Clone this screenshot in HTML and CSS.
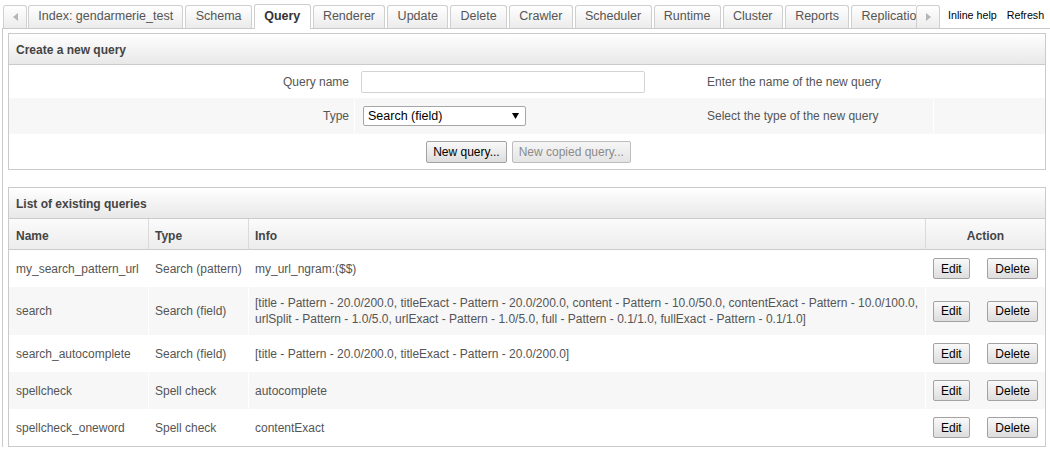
FILE: index.html
```html
<!DOCTYPE html>
<html lang="en">
<head>
<meta charset="utf-8">
<title>Query</title>
<link rel="stylesheet" href="styles.css">
</head>
<body>
<div class="page">
  <div class="topbar">
    <div class="scroll scroll-left"><svg width="5" height="8" viewBox="0 0 5 8"><path d="M5 0 L0 4 L5 8 Z" fill="#b5b5b5"/></svg></div>
    <div class="tabs-viewport">
      <div class="tabs">
        <div class="tab">Index: gendarmerie_test</div>
        <div class="tab">Schema</div>
        <div class="tab active">Query</div>
        <div class="tab">Renderer</div>
        <div class="tab">Update</div>
        <div class="tab">Delete</div>
        <div class="tab">Crawler</div>
        <div class="tab">Scheduler</div>
        <div class="tab">Runtime</div>
        <div class="tab">Cluster</div>
        <div class="tab">Reports</div>
        <div class="tab">Replication</div>
      </div>
    </div>
    <div class="scroll scroll-right"><svg width="5" height="8" viewBox="0 0 5 8"><path d="M0 0 L5 4 L0 8 Z" fill="#b5b5b5"/></svg></div>
    <div class="links"><span>Inline help</span><span>Refresh</span></div>
  </div>

  <div class="tabpanel">
    <section class="panel">
      <div class="panel-head">Create a new query</div>
      <div class="frow r1">
        <div class="fcell flabel">Query name</div>
        <div class="fcell ffield sep"><input class="text-input" type="text"></div>
        <div class="fcell fhelp">Enter the name of the new query</div>
        <div class="fcell sep"></div>
      </div>
      <div class="frow r2 alt">
        <div class="fcell flabel">Type</div>
        <div class="fcell ffield sep">
          <div class="select-wrap">
            <select class="select"><option>Search (field)</option></select>
            <svg class="select-arrow" width="7" height="6" viewBox="0 0 7 6"><path d="M0 0 L7 0 L3.5 6 Z" fill="#000"/></svg>
          </div>
        </div>
        <div class="fcell fhelp">Select the type of the new query</div>
        <div class="fcell sep"></div>
      </div>
      <div class="factions">
        <button class="btn">New query...</button>
        <button class="btn" disabled>New copied query...</button>
      </div>
    </section>

    <section class="panel">
      <div class="panel-head">List of existing queries</div>
      <table class="qtable">
        <colgroup>
          <col class="c-name">
          <col class="c-type">
          <col class="c-info">
          <col class="c-act">
        </colgroup>
        <thead>
          <tr><th>Name</th><th>Type</th><th>Info</th><th class="th-act">Action</th></tr>
        </thead>
        <tbody>
          <tr>
            <td>my_search_pattern_url</td><td>Search (pattern)</td><td>my_url_ngram:($$)</td>
            <td class="td-act"><div class="acts"><button class="btn sm">Edit</button><button class="btn sm">Delete</button></div></td>
          </tr>
          <tr class="alt">
            <td>search</td><td>Search (field)</td><td>[title - Pattern - 20.0/200.0, titleExact - Pattern - 20.0/200.0, content - Pattern - 10.0/50.0, contentExact - Pattern - 10.0/100.0, urlSplit - Pattern - 1.0/5.0, urlExact - Pattern - 1.0/5.0, full - Pattern - 0.1/1.0, fullExact - Pattern - 0.1/1.0]</td>
            <td class="td-act"><div class="acts"><button class="btn sm">Edit</button><button class="btn sm">Delete</button></div></td>
          </tr>
          <tr>
            <td>search_autocomplete</td><td>Search (field)</td><td>[title - Pattern - 20.0/200.0, titleExact - Pattern - 20.0/200.0]</td>
            <td class="td-act"><div class="acts"><button class="btn sm">Edit</button><button class="btn sm">Delete</button></div></td>
          </tr>
          <tr class="alt">
            <td>spellcheck</td><td>Spell check</td><td>autocomplete</td>
            <td class="td-act"><div class="acts"><button class="btn sm">Edit</button><button class="btn sm">Delete</button></div></td>
          </tr>
          <tr>
            <td>spellcheck_oneword</td><td>Spell check</td><td>contentExact</td>
            <td class="td-act"><div class="acts"><button class="btn sm">Edit</button><button class="btn sm">Delete</button></div></td>
          </tr>
        </tbody>
      </table>
    </section>
  </div>
</div>
</body>
</html>
```

FILE: styles.css
```css
html, body {
  margin: 0;
  padding: 0;
  background: #fff;
}
body {
  font-family: "Liberation Sans", Arial, sans-serif;
  font-size: 12px;
  color: #555;
  overflow: hidden;
}
.page {
  margin-left: 2px;
}

/* ---------- tab bar ---------- */
.topbar {
  display: flex;
  align-items: flex-end;
  height: 29px;
  box-sizing: border-box;
  border-bottom: 1px solid #cacaca;
  padding-left: 1px;
}
.scroll {
  flex: none;
  box-sizing: border-box;
  width: 24px;
  height: 23px;
  border: 1px solid #d0d0d0;
  border-bottom: none;
  border-radius: 3px 3px 0 0;
  background: linear-gradient(#ffffff, #ececec);
  display: flex;
  align-items: center;
  justify-content: center;
}
.scroll-left {
  margin-right: 1px;
}
.tabs-viewport {
  flex: none;
  width: 888px;
  height: 25px;
  margin-bottom: -1px;
  overflow: hidden;
}
.tabs {
  display: flex;
  align-items: flex-end;
  gap: 2px;
  height: 25px;
  white-space: nowrap;
}
.tab {
  flex: none;
  box-sizing: border-box;
  height: 23px;
  margin-bottom: 1px;
  padding: 0 9.3px 1px;
  line-height: 21px;
  border: 1px solid #cfcfcf;
  border-bottom: none;
  border-radius: 3px 3px 0 0;
  background: linear-gradient(#ffffff, #ebebeb);
  font-size: 12.5px;
  color: #555;
}
.tab.active {
  height: 25px;
  margin-bottom: 0;
  line-height: 23px;
  background: #fff;
  font-weight: bold;
  color: #333;
}
.links {
  align-self: center;
  margin-left: 8px;
  display: flex;
  gap: 10px;
  font-size: 10.7px;
  color: #000;
  padding-top: 2px;
}

/* ---------- tab panel ---------- */
.tabpanel {
  border-left: 1px solid #cacaca;
  padding: 4px 4px 0 5px;
}
.panel {
  border: 1px solid #cbcbcb;
}
.panel + .panel {
  margin-top: 17px;
}
.panel-head {
  height: 30px;
  line-height: 33px;
  overflow: hidden;
  padding-left: 7px;
  border-bottom: 1px solid #cbcbcb;
  background: linear-gradient(#ffffff, #e8e8e8);
  font-weight: bold;
  font-size: 12px;
  color: #444;
}

/* ---------- create form ---------- */
.frow {
  display: grid;
  grid-template-columns: 345px 346px 233px 1fr;
}
.frow.r1 { height: 33px; }
.frow.r2 { height: 36px; }
.frow.alt { background: #f7f7f7; }
.fcell {
  display: flex;
  align-items: center;
}
.sep {
  border-left: 1px solid #fff;
}
.flabel {
  justify-content: flex-end;
  padding-right: 5px;
}
.ffield {
  padding-left: 6px;
}
.fhelp {
  padding-left: 7px;
}
.text-input {
  box-sizing: border-box;
  width: 284px;
  height: 22px;
  margin: 0;
  padding: 0 4px;
  border: 1px solid #d3d3d3;
  border-radius: 2px;
  background: #fff;
  font: 12px "Liberation Sans", Arial, sans-serif;
  outline: none;
}
.select-wrap {
  position: relative;
  margin-left: 2px;
  display: flex;
}
.select {
  appearance: none;
  -webkit-appearance: none;
  box-sizing: border-box;
  width: 163px;
  height: 20px;
  margin: 0;
  padding: 0 4px;
  border: 1px solid #a6a6a6;
  border-radius: 2px;
  background: #fff;
  font: 12.5px "Liberation Sans", Arial, sans-serif;
  color: #000;
  outline: none;
}
.select-arrow {
  position: absolute;
  right: 7px;
  top: 7px;
  pointer-events: none;
}
.factions {
  box-sizing: border-box;
  height: 35px;
  padding: 7px 0 0 3px;
  display: flex;
  justify-content: center;
  align-items: flex-start;
  gap: 5px;
}

/* ---------- buttons ---------- */
.btn {
  box-sizing: border-box;
  height: 22px;
  margin: 0;
  padding: 0 6px;
  border: 1px solid #a2a2a2;
  border-radius: 2px;
  background: linear-gradient(#f9f9f9, #dddddd);
  font: 12px "Liberation Sans", Arial, sans-serif;
  color: #000;
}
.btn:disabled {
  color: #8a8a8a;
  border-color: #bdbdbd;
  background: linear-gradient(#f6f6f6, #e4e4e4);
}
.btn.sm {
  height: 21px;
  padding: 0 7px;
}

/* ---------- list table ---------- */
.qtable {
  width: 100%;
  border-collapse: separate;
  border-spacing: 0;
  table-layout: fixed;
}
.c-name { width: 139px; }
.c-type { width: 100px; }
.c-info { width: 677px; }
.c-act { width: 120px; }
.qtable th {
  box-sizing: border-box;
  height: 31px;
  padding: 3px 4px 0 6px;
  border-bottom: 1px solid #cbcbcb;
  background: linear-gradient(#fbfbfb, #ececec);
  font-weight: bold;
  font-size: 12px;
  color: #444;
  text-align: left;
}
.qtable th + th {
  border-left: 1px solid #dadada;
}
.qtable th:first-child,
.qtable td:first-child {
  padding-left: 7px;
}
.qtable th.th-act {
  text-align: center;
  padding: 3px 0 0;
}
.qtable td {
  padding: 8px 3px 8px 6px;
  line-height: 16px;
  vertical-align: middle;
  color: #555;
}
.qtable td + td {
  border-left: 1px solid #fff;
}
.qtable tr.alt td {
  background: #f7f7f7;
}
.qtable td.td-act {
  padding: 8px 7px;
}
.acts {
  display: flex;
  justify-content: space-between;
}
```
